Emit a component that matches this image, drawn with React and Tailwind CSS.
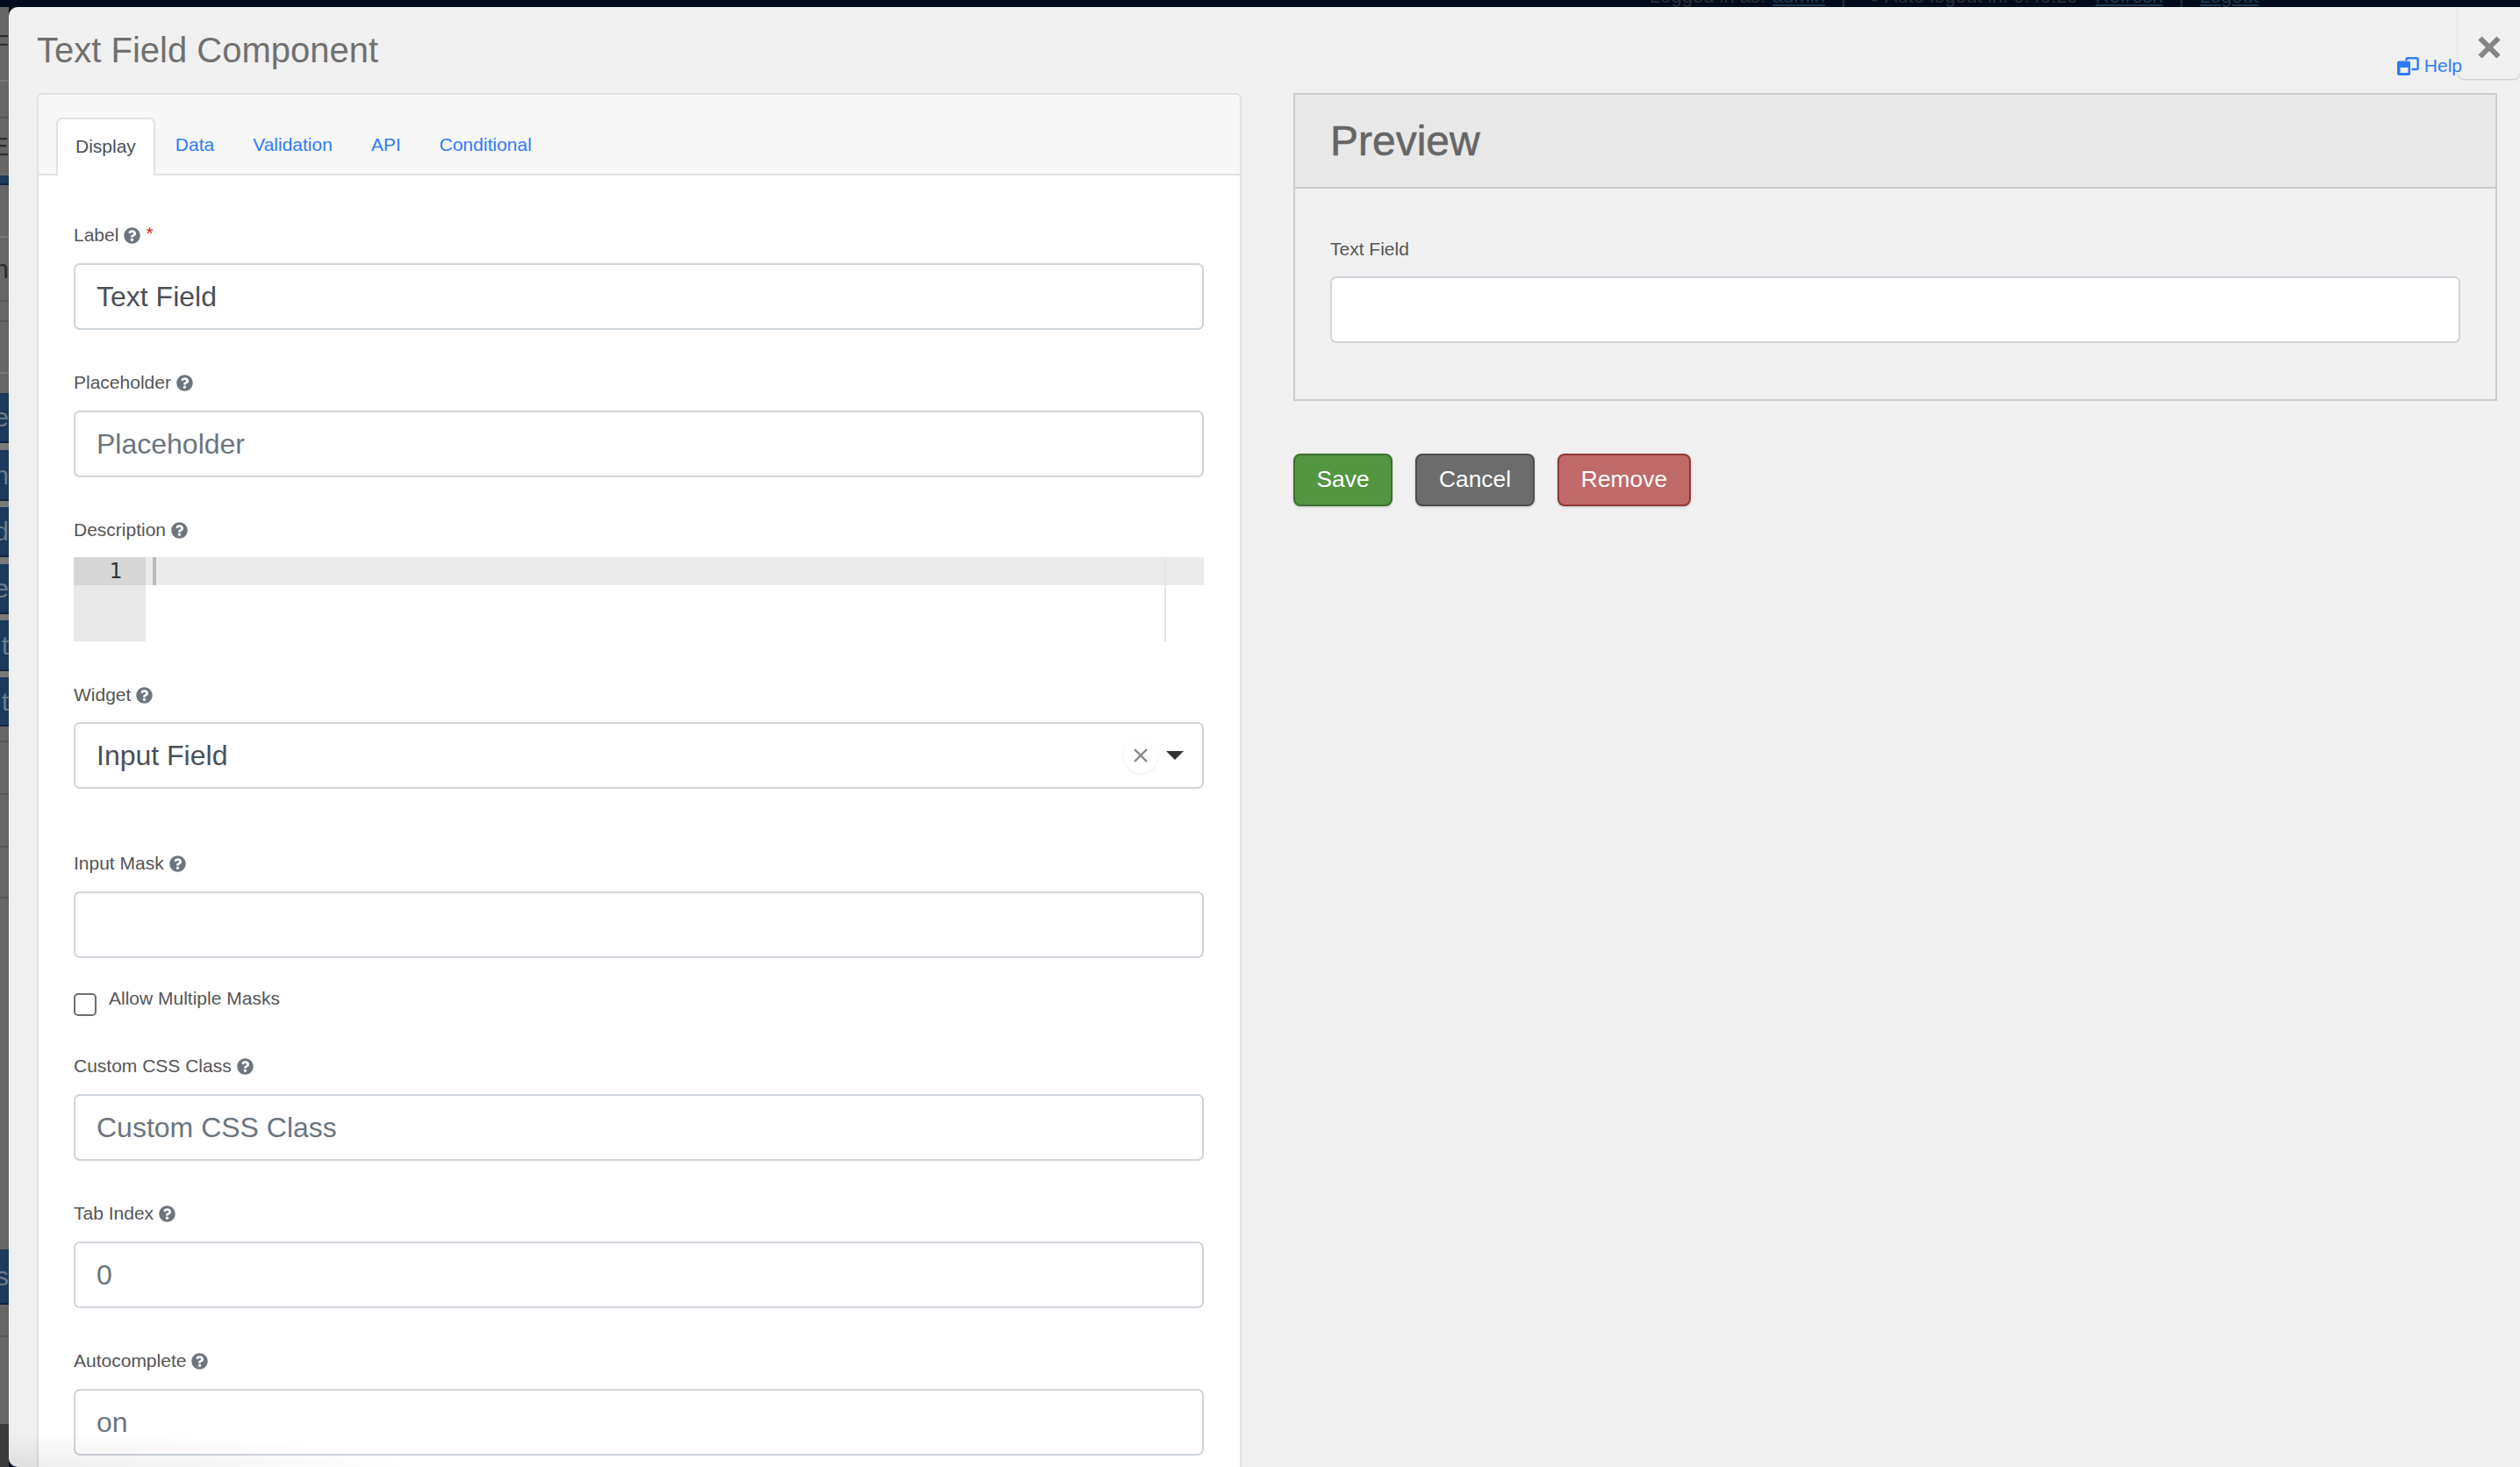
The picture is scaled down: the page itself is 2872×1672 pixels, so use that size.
import React from 'react';
import { FaQuestionCircle } from 'react-icons/fa';

const stripRows = [
  { h: 85, letter: 'F', line: 'border-[#777777]' },
  { h: 42, line: 'border-[#575757]' },
  { h: 65, letter: 'E', line: 'border-[#6a6a6a]' },
  { h: 11, navy: true },
  { h: 60, line: 'border-[#777777]' },
  { h: 73, letter: 'n', line: 'border-[#575757]' },
  { h: 23, line: 'border-[#575757]' },
  { h: 59, line: 'border-[#777777]' },
  { h: 22 },
  { h: 57, navy: true, letter: 'e' },
  { h: 8, light: true },
  { h: 58, navy: true, letter: 'm' },
  { h: 7, light: true },
  { h: 57, navy: true, letter: 'd' },
  { h: 8, light: true },
  { h: 57, navy: true, letter: 'e' },
  { h: 7, light: true },
  { h: 58, navy: true, letter: 't' },
  { h: 7, light: true },
  { h: 56, navy: true, letter: 't' },
  { h: 18, line: 'border-[#575757]' },
  { h: 60, line: 'border-[#575757]' },
  { h: 60, line: 'border-[#575757]' },
  { h: 58, line: 'border-[#575757]' },
  { h: 400 },
  { h: 63, navy: true, letter: 's' },
  { h: 37, line: 'border-[#575757]' },
  { h: 99 },
  { h: 49, dark: true },
];

function BackdropStrip() {
  return (
    <div className="w-[10px] shrink-0 overflow-hidden">
      {stripRows.map((row, i) => {
        let tone = 'bg-[#666666] text-[#2c2c2c]';
        if (row.navy) tone = 'bg-[#1b3a5e] text-[#6f7c8a] border-b-2 border-[#0f2440]';
        if (row.light) tone = 'bg-[#7a7a7a]';
        if (row.dark) tone = 'bg-[#3a3a3a]';
        return (
          <div
            key={i}
            style={{ height: row.h }}
            className={`flex items-center justify-end overflow-hidden text-[30px] ${tone} ${row.line ? 'border-b-2 ' + row.line : ''}`}
          >
            {row.letter}
          </div>
        );
      })}
    </div>
  );
}

function TopBar() {
  return (
    <div className="h-[8px] shrink-0 overflow-hidden bg-[#020c1c]">
      <div className="-mt-[19px] flex h-[28px] items-center pl-[1880px] text-[22px] text-[#2b3036] whitespace-nowrap">
        <span>Logged in as:</span>
        <span className="ml-[8px] text-[#1f3a50] underline">admin</span>
        <span className="ml-[18px]">|</span>
        <span className="ml-[26px]">● Auto logout in: 0:49:29</span>
        <span className="ml-[20px] text-[#1f3a50] underline">Refresh</span>
        <span className="ml-[18px]">|</span>
        <span className="ml-[18px] text-[#1f3a50] underline">Logout</span>
      </div>
    </div>
  );
}

function HelpIcon() {
  return (
    <svg className="mr-[6px]" width="25" height="21" viewBox="0 0 25 21" fill="none">
      <path d="M10.5 4 V2.5 Q10.5 1.2 11.8 1.2 H22.2 Q23.6 1.2 23.6 2.5 V12.5 Q23.6 14 22.2 14 H16.5" stroke="#2f7bf6" strokeWidth="2.4" />
      <path
        fillRule="evenodd"
        d="M2 4.5 H13 Q15 4.5 15 6.5 V19 Q15 21 13 21 H2 Q0 21 0 19 V6.5 Q0 4.5 2 4.5 Z M3.5 12 V18 H12.5 V12 Z"
        fill="#2f7bf6"
      />
    </svg>
  );
}

function Label({ children, required }) {
  return (
    <div className="flex h-[30px] items-center text-[21px] text-[#555555]">
      {children}
      <FaQuestionCircle className="ml-[6px] text-[19px] text-[#6c757d]" />
      {required && <span className="ml-[6px] -mt-[4px] text-[21px] text-[#e0201c]">*</span>}
    </div>
  );
}

function TextInput({ value, placeholder, muted }) {
  return (
    <input
      readOnly
      value={value || ''}
      placeholder={placeholder}
      className={`block h-[76px] w-full rounded-[7px] border-2 border-[#ced4da] bg-white px-[24px] text-[32px] outline-none placeholder:text-[#6c757d] ${muted ? 'text-[#6c757d]' : 'text-[#495057]'}`}
    />
  );
}

function Field({ label, required, className, ...rest }) {
  return (
    <div className={className}>
      <Label required={required}>{label}</Label>
      <div className="mt-[17px]">
        <TextInput {...rest} />
      </div>
    </div>
  );
}

function DescriptionEditor() {
  return (
    <div className="relative mt-[16px] flex h-[96px]">
      <div className="w-[82px] shrink-0 bg-[#e8e8e8]">
        <div className="flex h-[32px] items-center justify-end bg-[#d6d6d6] pr-[27px] font-['DejaVu_Sans_Mono',monospace] text-[24px] text-[#333333]">
          1
        </div>
      </div>
      <div className="flex-1">
        <div className="h-[32px] bg-[#ebebeb] pl-[8px]">
          <div className="h-full w-[4px] bg-[#bbbbbb]" />
        </div>
      </div>
      <div className="absolute right-[43px] top-0 h-full w-[2px] bg-[#e4e4e4]" />
    </div>
  );
}

function WidgetSelect() {
  return (
    <div className="flex h-[76px] items-center rounded-[7px] border-2 border-[#ced4da] bg-white pl-[24px] pr-[21px] text-[32px] text-[#495057]">
      <span className="flex-1">Input Field</span>
      <span className="flex h-[40px] w-[40px] items-center justify-center rounded-full bg-white shadow-[0_1px_3px_rgba(0,0,0,0.08)]">
        <svg width="18" height="18" viewBox="0 0 18 18" stroke="#858585" strokeWidth="2.4" fill="none">
          <path d="M2 2 L16 16 M16 2 L2 16" />
        </svg>
      </span>
      <svg className="ml-[9px]" width="20" height="10" viewBox="0 0 20 10" fill="#333333">
        <path d="M0 0 H20 L10 10 Z" />
      </svg>
    </div>
  );
}

function Tabs() {
  const tabs = ['Data', 'Validation', 'API', 'Conditional'];
  return (
    <div className="flex h-[92px] items-end gap-[2px] border-b-2 border-[#dee2e6] bg-[#f7f7f7] pl-[20px] text-[21px] text-[#2f7bf6]">
      <div className="-mb-[2px] flex h-[66px] items-center rounded-t-[7px] border-2 border-b-0 border-[#dee2e6] bg-white px-[20px] pb-[3px] text-[#495057]">
        Display
      </div>
      {tabs.map((tab) => (
        <div key={tab} className="flex h-[64px] items-center px-[21px] pb-[2px]">
          {tab}
        </div>
      ))}
    </div>
  );
}

function Button({ children, className }) {
  return (
    <button className={`h-[60px] rounded-[8px] border-2 text-[26.4px] text-white shadow-[0_1px_3px_rgba(0,0,0,0.2)] ${className}`}>
      {children}
    </button>
  );
}

export default function App() {
  return (
    <div className="flex h-screen flex-col overflow-hidden bg-[#020c1c] font-['Liberation_Sans',Arial,sans-serif]">
      <TopBar />
      <div className="flex min-h-0 flex-1">
        <BackdropStrip />
        <div className="relative min-w-0 flex-1 overflow-hidden rounded-[10px] rounded-r-none bg-[#f0f0f0]">
          <div className="absolute right-0 top-0 flex h-[82px] w-[71px] items-center justify-center rounded-b-[8px] bg-[#f0f0f0] pt-[10px] shadow-[0_1px_2px_rgba(0,0,0,0.18)]">
            <svg width="26" height="26" viewBox="0 0 26 26" stroke="#858585" strokeWidth="6" fill="none">
              <path d="M2.5 2.5 L23.5 23.5 M23.5 2.5 L2.5 23.5" />
            </svg>
          </div>

          <div className="relative flex h-[98px] items-start justify-between pl-[32px] pr-[66px]">
            <h1 className="mt-[25px] text-[40px] leading-[48px] text-[#707070]">Text Field Component</h1>
            <a className="mt-[52px] flex h-[30px] items-center text-[21px] text-[#2f7bf6]">
              <HelpIcon />
              Help
            </a>
          </div>

          <div className="flex items-start gap-[59px] pl-[32px] pr-[26px]">
            <div className="w-[1373px] shrink-0 overflow-hidden rounded-t-[7px] border-2 border-[#e0e0e0] bg-white">
              <Tabs />
              <div className="pb-[60px] pl-[40px] pr-[41px] pt-[53px]">
                <Field label="Label" required value="Text Field" className="mb-[45px]" />
                <Field label="Placeholder" placeholder="Placeholder" className="mb-[45px]" />
                <Label>Description</Label>
                <DescriptionEditor />
                <div className="mt-[46px]">
                  <Label>Widget</Label>
                  <div className="mt-[16px]">
                    <WidgetSelect />
                  </div>
                </div>
                <Field label="Input Mask" className="mt-[70px]" />
                <div className="mt-[40px] flex items-start gap-[14px]">
                  <input type="checkbox" readOnly className="h-[26px] w-[26px] appearance-none rounded-[5px] border-2 border-[#6e6e6e] bg-white" />
                  <span className="-mt-[9px] text-[21px] leading-[30px] text-[#555555]">Allow Multiple Masks</span>
                </div>
                <Field label="Custom CSS Class" placeholder="Custom CSS Class" className="mt-[42px] mb-[45px]" />
                <Field label="Tab Index" value="0" muted className="mb-[45px]" />
                <Field label="Autocomplete" value="on" muted />
              </div>
            </div>

            <div className="min-w-0 flex-1">
              <div className="border-2 border-[#cccccc]">
                <div className="flex h-[107px] items-center border-b-2 border-[#cccccc] bg-[#e8e8e8] pl-[40px] text-[48px] text-[#666666] [-webkit-text-stroke:0.6px_#666666]">
                  Preview
                </div>
                <div className="h-[240px] px-[40px] pt-[54px]">
                  <div className="flex h-[30px] items-center text-[21px] text-[#555555]">Text Field</div>
                  <div className="mt-[16px]">
                    <TextInput />
                  </div>
                </div>
              </div>
              <div className="mt-[60px] flex gap-[26px]">
                <Button className="w-[113px] border-[#3e7030] bg-[#529642]">Save</Button>
                <Button className="w-[136px] border-[#4e4e4e] bg-[#6c6c6c]">Cancel</Button>
                <Button className="w-[152px] border-[#8f3a38] bg-[#bf6a69]">Remove</Button>
              </div>
            </div>
          </div>

          <div className="pointer-events-none absolute bottom-0 left-0 h-[40px] w-[460px] bg-[radial-gradient(ellipse_at_bottom_left,rgba(0,0,0,0.07),transparent_70%)]" />
        </div>
      </div>
    </div>
  );
}
